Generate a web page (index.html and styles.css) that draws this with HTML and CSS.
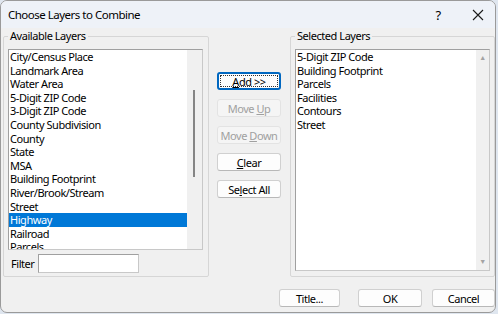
FILE: index.html
```html
<!DOCTYPE html>
<html lang="en">
<head>
    <meta charset="UTF-8">
    <title>Choose Layers to Combine</title>
    <link rel="stylesheet" href="styles.css">
</head>
<body>
    <div class="window">
        <div class="titlebar">
            <span class="title">Choose Layers to Combine</span>
            <span class="help">?</span>
            <span class="close">
                <svg width="12" height="12" viewBox="0 0 12 12"><path d="M1 1 L11 11 M11 1 L1 11" stroke="#1a1a1a" stroke-width="1.1" fill="none"/></svg>
            </span>
        </div>

        <div class="content">
            <fieldset class="group group-left">
                <legend>Available Layers</legend>
                <div class="listbox listbox-left">
                    <ul class="items">
                        <li>City/Census Place</li>
                        <li>Landmark Area</li>
                        <li>Water Area</li>
                        <li>5-Digit ZIP Code</li>
                        <li>3-Digit ZIP Code</li>
                        <li>County Subdivision</li>
                        <li>County</li>
                        <li>State</li>
                        <li>MSA</li>
                        <li>Building Footprint</li>
                        <li>River/Brook/Stream</li>
                        <li>Street</li>
                        <li class="selected">Highway</li>
                        <li>Railroad</li>
                        <li>Parcels</li>
                    </ul>
                    <div class="vscroll">
                        <div class="thumb"></div>
                    </div>
                </div>
                <div class="filter">
                    <label for="filter">Filter</label>
                    <input type="text" id="filter">
                </div>
            </fieldset>

            <div class="actions">
                <button class="btn focused"><u>A</u>dd &gt;&gt;</button>
                <button class="btn" disabled>Move <u>U</u>p</button>
                <button class="btn" disabled>Move <u>D</u>own</button>
                <button class="btn"><u>C</u>lear</button>
                <button class="btn">Se<u>l</u>ect All</button>
            </div>

            <fieldset class="group group-right">
                <legend>Selected Layers</legend>
                <div class="listbox listbox-right">
                    <ul class="items">
                        <li>5-Digit ZIP Code</li>
                        <li>Building Footprint</li>
                        <li>Parcels</li>
                        <li>Facilities</li>
                        <li>Contours</li>
                        <li>Street</li>
                    </ul>
                    <div class="vscroll arrows">
                        <span class="arrow">&#9650;</span>
                        <span class="arrow">&#9660;</span>
                    </div>
                </div>
            </fieldset>
        </div>

        <div class="footer">
            <button class="btn btn-title">Title...</button>
            <button class="btn btn-ok">OK</button>
            <button class="btn btn-cancel">Cancel</button>
        </div>
    </div>
</body>
</html>
```

FILE: styles.css
```css
body {
    margin: 0;
    background: #dfe6ef;
    font-family: "Noto Sans", "Open Sans", sans-serif;
    font-size: 11px;
    letter-spacing: -0.45px;
    color: #000;
}
.window {
    width: 496px;
    height: 313px;
    box-sizing: border-box;
    background: #f0f0f0;
    border: 1px solid #9a9a9a;
    border-radius: 7px;
    overflow: hidden;
}
.titlebar {
    height: 27px;
    display: flex;
    align-items: center;
    background: #eef2f8;
    padding-left: 7px;
}
.title {
    flex: 1;
    font-size: 11.5px;
    letter-spacing: -0.5px;
}
.help {
    width: 20px;
    margin-right: 7px;
    font-size: 13px;
    text-align: center;
}
.close {
    width: 46px;
    display: flex;
    justify-content: center;
    margin-right: -6px;
}

/* main area */
.content {
    display: flex;
    padding-left: 2px;
}
.group {
    margin: 0;
    padding: 5px 4px 3px 4px;
    border: 1px solid #d6d6d6;
    border-radius: 2px;
}
.group legend {
    padding: 0 2px;
    margin-left: 0;
    line-height: 16px;
}
.group-left {
    width: 206px;
    box-sizing: border-box;
}
.group-right {
    width: 204px;
    box-sizing: border-box;
    padding-bottom: 5px;
}
.listbox {
    display: flex;
    background: #fff;
    border: 1px solid #a0a0a0;
    border-bottom-color: #c8c8c8;
    border-right-color: #c8c8c8;
    overflow: hidden;
}
.listbox-left {
    width: 195px;
    height: 201px;
    box-sizing: border-box;
}
.listbox-right {
    width: 195px;
    height: 222px;
    box-sizing: border-box;
}
.items {
    flex: 1;
    list-style: none;
    margin: 0;
    padding: 0;
}
.items li {
    height: 13.6px;
    line-height: 13.6px;
    padding-left: 1px;
    white-space: nowrap;
}
.items li.selected {
    background: #0078d7;
    color: #fff;
}
.vscroll {
    width: 15px;
    background: #f0f0f0;
    position: relative;
}
.thumb {
    position: absolute;
    left: 6px;
    top: 40px;
    width: 2px;
    height: 87px;
    background: #858585;
}
.arrows {
    width: 13px;
    display: flex;
    flex-direction: column;
    justify-content: space-between;
    align-items: center;
    padding: 3px 0 4px;
}
.arrow {
    font-size: 7px;
    color: #a3a3a3;
}
.filter {
    display: flex;
    align-items: center;
    margin-top: 4px;
    padding-left: 3px;
}
.filter label {
    width: 27px;
}
.filter input {
    width: 101px;
    height: 19px;
    box-sizing: border-box;
    border: 1px solid #a0a0a0;
    border-bottom-color: #c8c8c8;
    border-right-color: #c8c8c8;
    background: #fff;
    margin: 0;
}

/* buttons */
.btn {
    font-family: inherit;
    font-size: 11px;
    letter-spacing: inherit;
    height: 18px;
    padding: 0;
    white-space: nowrap;
    background: #fdfdfd;
    border: 1px solid #d0d0d0;
    border-bottom-color: #b8b8b8;
    border-radius: 3px;
    color: #000;
}
.btn:disabled {
    background: #f5f5f5;
    border-color: #e3e3e3;
    color: #a0a0a0;
}
.btn u {
    text-underline-offset: 1px;
}
.btn.focused {
    border: 2px solid #0067c0;
    outline: 1px dotted #333;
    outline-offset: -4px;
}
.actions {
    width: 81px;
    display: flex;
    flex-direction: column;
    gap: 9px;
    padding: 44px 8px 0;
    box-sizing: border-box;
}
.actions .btn {
    width: 64px;
}
.footer {
    display: flex;
    padding: 12px 0 0 278px;
}
.btn-title {
    width: 61px;
    margin-right: 18px;
}
.btn-ok {
    width: 64px;
    margin-right: 10px;
}
.btn-cancel {
    width: 63px;
}
```
